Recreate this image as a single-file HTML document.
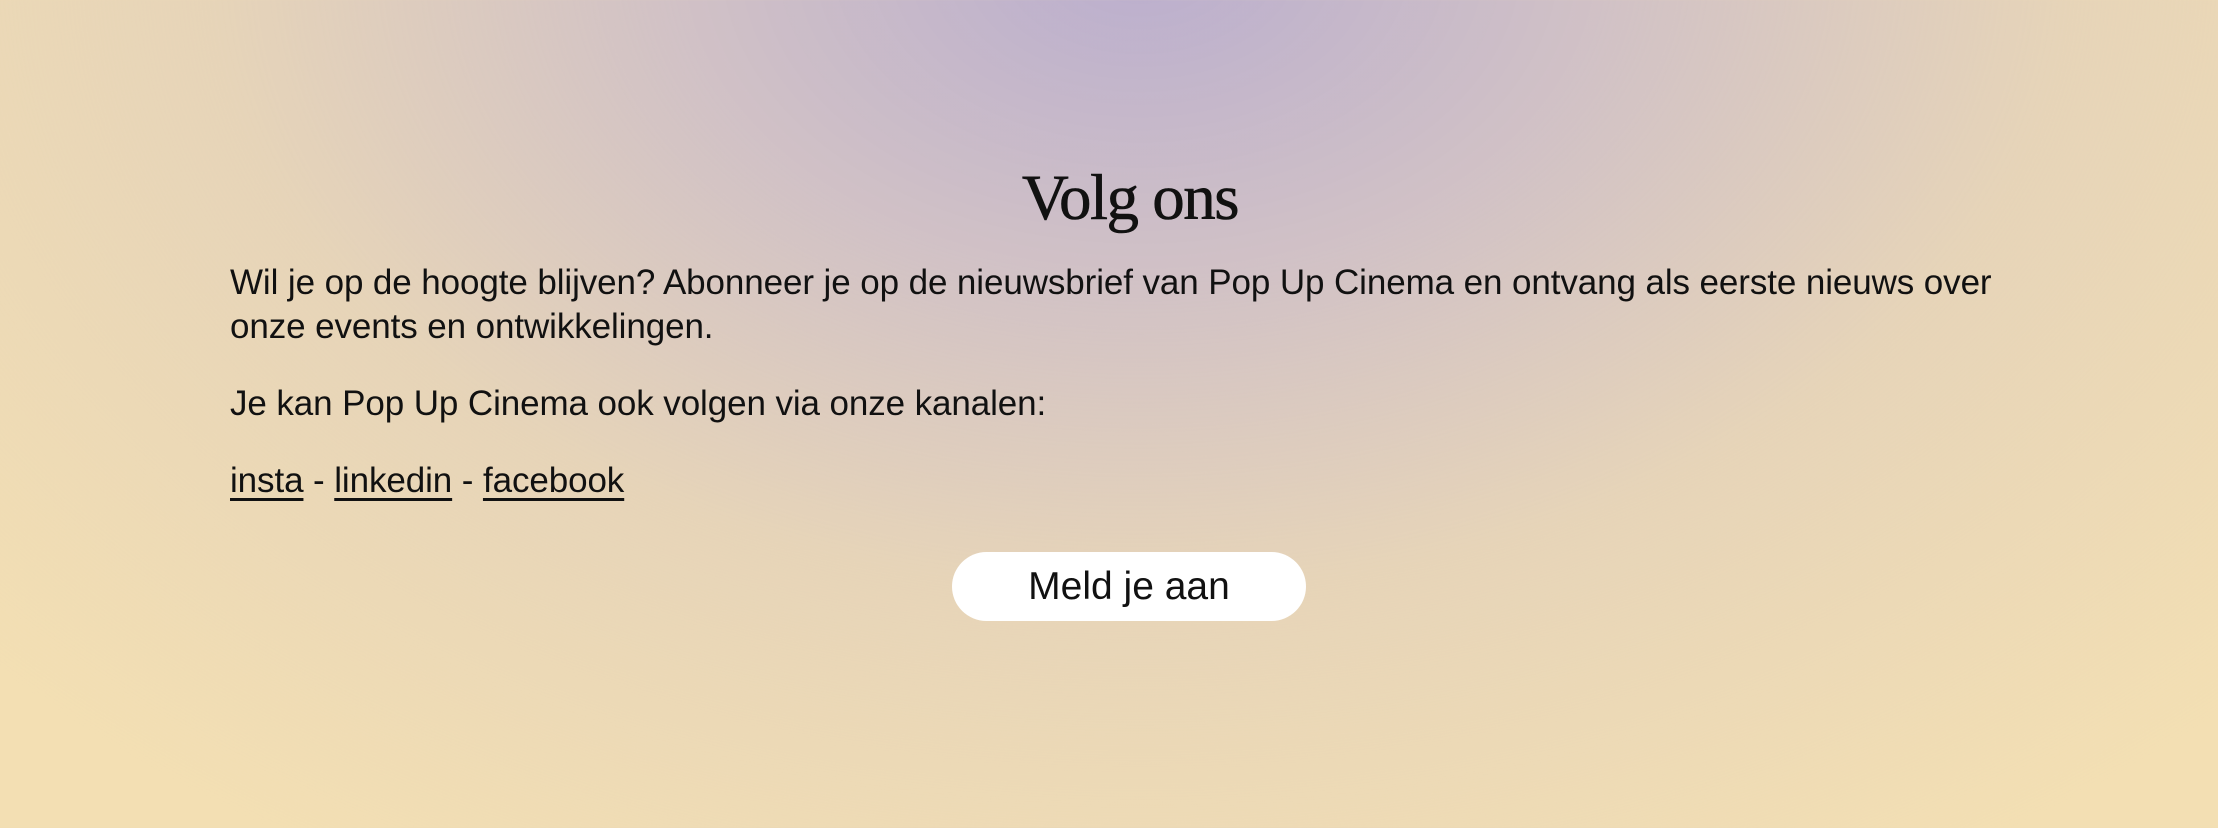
<!DOCTYPE html>
<html><head><meta charset="utf-8"><style>
html,body{margin:0;padding:0}
body{width:2218px;height:828px;overflow:hidden;position:relative;
background:
radial-gradient(ellipse 1550px 1050px at 1140px -40px, rgba(186,174,206,1) 0%, rgba(205,190,200,0.9) 30%, rgba(222,205,188,0.6) 60%, rgba(243,223,180,0) 100%),
#f3dfb3;
font-family:"Liberation Sans",sans-serif;color:#111}
.t{position:absolute;white-space:nowrap;line-height:1}
h1{position:absolute;margin:0;left:0;width:2260px;text-align:center;top:166px;font-family:"Liberation Serif",serif;font-weight:normal;font-size:65px;line-height:1;letter-spacing:-1.5px;color:#111;-webkit-text-stroke:0.6px #111}
.b{font-size:35px;left:230px;letter-spacing:-0.1px}
a{color:#111;text-decoration:underline;text-decoration-thickness:3px;text-underline-offset:6px}
.btn{position:absolute;left:952px;top:552px;width:354px;height:69px;border-radius:35px;background:#fff;text-align:center;line-height:69px;font-size:39px;color:#111}
</style></head><body>
<h1>Volg ons</h1>
<div class="t b" style="top:265px">Wil je op de hoogte blijven? Abonneer je op de nieuwsbrief van Pop Up Cinema en ontvang als eerste nieuws over</div>
<div class="t b" style="top:309px">onze events en ontwikkelingen.</div>
<div class="t b" style="top:386px">Je kan Pop Up Cinema ook volgen via onze kanalen:</div>
<div class="t b" style="top:463px"><a>insta</a> - <a>linkedin</a> - <a>facebook</a></div>
<div class="btn">Meld je aan</div>
</body></html>
